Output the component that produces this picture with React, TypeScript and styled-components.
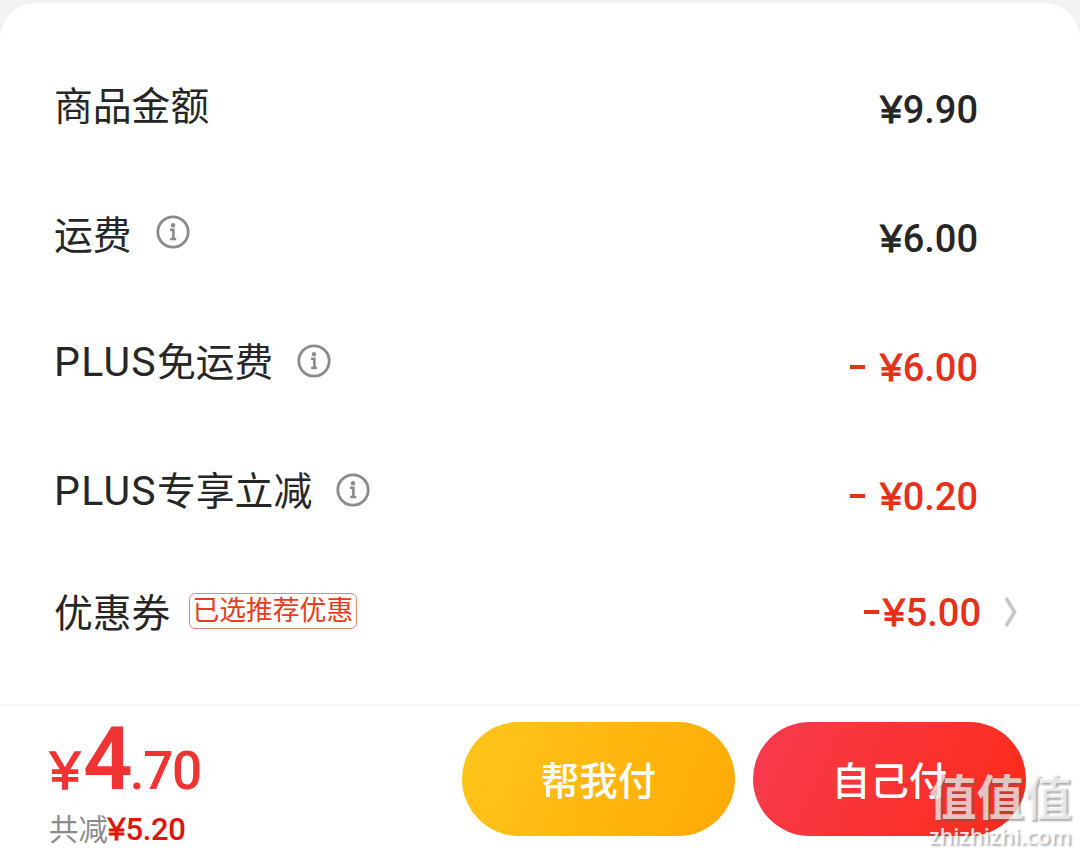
import styled, { createGlobalStyle } from 'styled-components';

const GlobalStyle = createGlobalStyle`
  * {
    box-sizing: border-box;
  }
  body {
    margin: 0;
    background-color: #f2f2f2;
    font-family: 'Noto Sans CJK SC', sans-serif;
  }
`;

const Page = styled.div`
  position: relative;
  width: 1080px;
  height: 854px;
  padding-top: 3px;
  overflow: hidden;
`;

const Sheet = styled.div`
  display: flex;
  flex-direction: column;
  height: 851px;
  background-color: #fff;
  border-radius: 36px 36px 0 0;
`;

const PriceList = styled.div`
  height: 701px;
  padding: 37px 61px 0 54px;
`;

const PriceRow = styled.div<{ $height?: number }>`
  display: flex;
  align-items: center;
  justify-content: space-between;
  height: ${(props) => props.$height || 129}px;
`;

const LabelGroup = styled.div`
  display: flex;
  align-items: center;
`;

const Label = styled.span`
  padding-bottom: 4px;
  color: #262626;
  font-size: 38.8px;
  font-weight: 400;
  line-height: 56px;
  white-space: nowrap;
`;

const LatinLabel = styled.span`
  font-family: Roboto, sans-serif;
  font-size: 41px;
  font-weight: 400;
  letter-spacing: 1.3px;
`;

const InfoSVG = styled.svg`
  width: 34px;
  height: 34px;
  margin: -4px 0 0 24px;
`;

const CouponTag = styled.span`
  height: 36px;
  margin: -3px 0 0 19px;
  padding: 0 3px 0 2px;
  border: 1px solid #e8867d;
  border-radius: 6px;
  color: #e93b21;
  font-size: 26.8px;
  line-height: 30px;
  white-space: nowrap;
`;

const Amount = styled.span<{ $discount?: boolean }>`
  margin: 11px 41px 0 0;
  color: ${(props) => (props.$discount ? '#e5301a' : '#262626')};
  font-family: Roboto, sans-serif;
  font-size: 38px;
  font-weight: 500;
  line-height: 44px;
  white-space: pre;
`;

const CouponAmount = styled(Amount)`
  margin: 2px 22px 0 0;
`;

const Yen = styled.span`
  margin-right: 0.02em;
  font-family: 'Liberation Sans', sans-serif;
  font-size: 1.02em;
  font-weight: 400;
  line-height: 1;
  -webkit-text-stroke: 0.028em currentColor;
`;

const Minus = styled.span<{ $gap: number }>`
  display: inline-block;
  width: 15px;
  height: 4px;
  margin-right: ${(props) => props.$gap}px;
  background-color: currentColor;
  vertical-align: 12px;
`;

const ChevronSVG = styled.svg`
  width: 16px;
  height: 32px;
`;

const Footer = styled.div`
  display: flex;
  gap: 18px;
  height: 150px;
  padding: 16px 54px 0 50px;
  border-top: 2px solid #f6f6f6;
`;

const Summary = styled.div`
  flex: 1;
`;

const Total = styled.div`
  height: 72px;
  color: #f03434;
  font-family: Roboto, sans-serif;
  font-size: 53px;
  font-weight: 500;
  line-height: 74px;
  letter-spacing: -1.2px;
  white-space: nowrap;
`;

const TotalMain = styled.span`
  margin-left: 3px;
  font-size: 87px;
  font-weight: 600;
  letter-spacing: -3px;
`;

const Saved = styled.div`
  display: flex;
  align-items: baseline;
  margin: 13px 0 0 -1px;
  color: #8c8c8c;
  font-size: 29.4px;
  line-height: 40px;
`;

const SavedAmount = styled.span`
  color: #e1130b;
  font-family: Roboto, sans-serif;
  font-size: 31px;
  font-weight: 500;
  letter-spacing: -0.4px;
`;

const PayButton = styled.button<{ $from: string; $to: string }>`
  width: 273px;
  height: 114px;
  padding: 0 0 2px;
  flex: none;
  border: none;
  border-radius: 57px;
  background: linear-gradient(115deg, ${(props) => props.$from}, ${(props) => props.$to});
  color: #fff;
  font-family: inherit;
  font-size: 38.5px;
  font-weight: 500;
`;

const Watermark = styled.div`
  position: absolute;
  top: 767px;
  left: 929px;
  color: rgba(255, 255, 255, 0.7);
  text-shadow: 2px 2px 2px rgba(90, 90, 90, 0.5);
  white-space: nowrap;
`;

const WatermarkName = styled.div`
  font-size: 47.5px;
  font-weight: 700;
  line-height: 56px;
`;

const WatermarkSite = styled.div`
  padding-top: 1px;
  color: rgba(255, 255, 255, 0.85);
  font-family: 'Open Sans', sans-serif;
  font-size: 21.8px;
  font-weight: 600;
  line-height: 24px;
`;

const InfoIcon: React.FC = () => (
  <InfoSVG viewBox="0 0 34 34" fill="none" stroke="#8b8b8b">
    <circle cx="17" cy="17" r="15.2" strokeWidth="2.8" />
    <circle cx="17" cy="10.3" r="2.2" fill="#8b8b8b" stroke="none" />
    <path d="M14 14.8h3.4v8.6M14.2 24h6" strokeWidth="2.6" />
  </InfoSVG>
);

const App: React.FC = () => {
  return (
    <>
      <GlobalStyle />
      <Page>
        <Sheet>
          <PriceList>
            <PriceRow>
              <Label>商品金额</Label>
              <Amount>
                <Yen>¥</Yen>9.90
              </Amount>
            </PriceRow>
            <PriceRow>
              <LabelGroup>
                <Label>运费</Label>
                <InfoIcon />
              </LabelGroup>
              <Amount>
                <Yen>¥</Yen>6.00
              </Amount>
            </PriceRow>
            <PriceRow>
              <LabelGroup>
                <Label>
                  <LatinLabel>PLUS</LatinLabel>免运费
                </Label>
                <InfoIcon />
              </LabelGroup>
              <Amount $discount>
                <Minus $gap={15} />
                <Yen>¥</Yen>6.00
              </Amount>
            </PriceRow>
            <PriceRow>
              <LabelGroup>
                <Label>
                  <LatinLabel>PLUS</LatinLabel>专享立减
                </Label>
                <InfoIcon />
              </LabelGroup>
              <Amount $discount>
                <Minus $gap={15} />
                <Yen>¥</Yen>0.20
              </Amount>
            </PriceRow>
            <PriceRow $height={112}>
              <LabelGroup>
                <Label>优惠券</Label>
                <CouponTag>已选推荐优惠</CouponTag>
              </LabelGroup>
              <LabelGroup>
                <CouponAmount $discount>
                  <Minus $gap={4} />
                  <Yen>¥</Yen>5.00
                </CouponAmount>
                <ChevronSVG viewBox="0 0 16 32" fill="none" stroke="#c8c8c8" strokeWidth="3.8">
                  <path d="M3 2l8.5 14L3 30" />
                </ChevronSVG>
              </LabelGroup>
            </PriceRow>
          </PriceList>
          <Footer>
            <Summary>
              <Total>
                <Yen>¥</Yen>
                <TotalMain>4</TotalMain>.70
              </Total>
              <Saved>
                共减
                <SavedAmount>
                  <Yen>¥</Yen>5.20
                </SavedAmount>
              </Saved>
            </Summary>
            <PayButton $from="#ffc61c" $to="#ffa904">
              帮我付
            </PayButton>
            <PayButton $from="#f63b50" $to="#fd2b18">
              自己付
            </PayButton>
          </Footer>
        </Sheet>
        <Watermark>
          <WatermarkName>值值值</WatermarkName>
          <WatermarkSite>zhizhizhi.com</WatermarkSite>
        </Watermark>
      </Page>
    </>
  );
};

export default App;
